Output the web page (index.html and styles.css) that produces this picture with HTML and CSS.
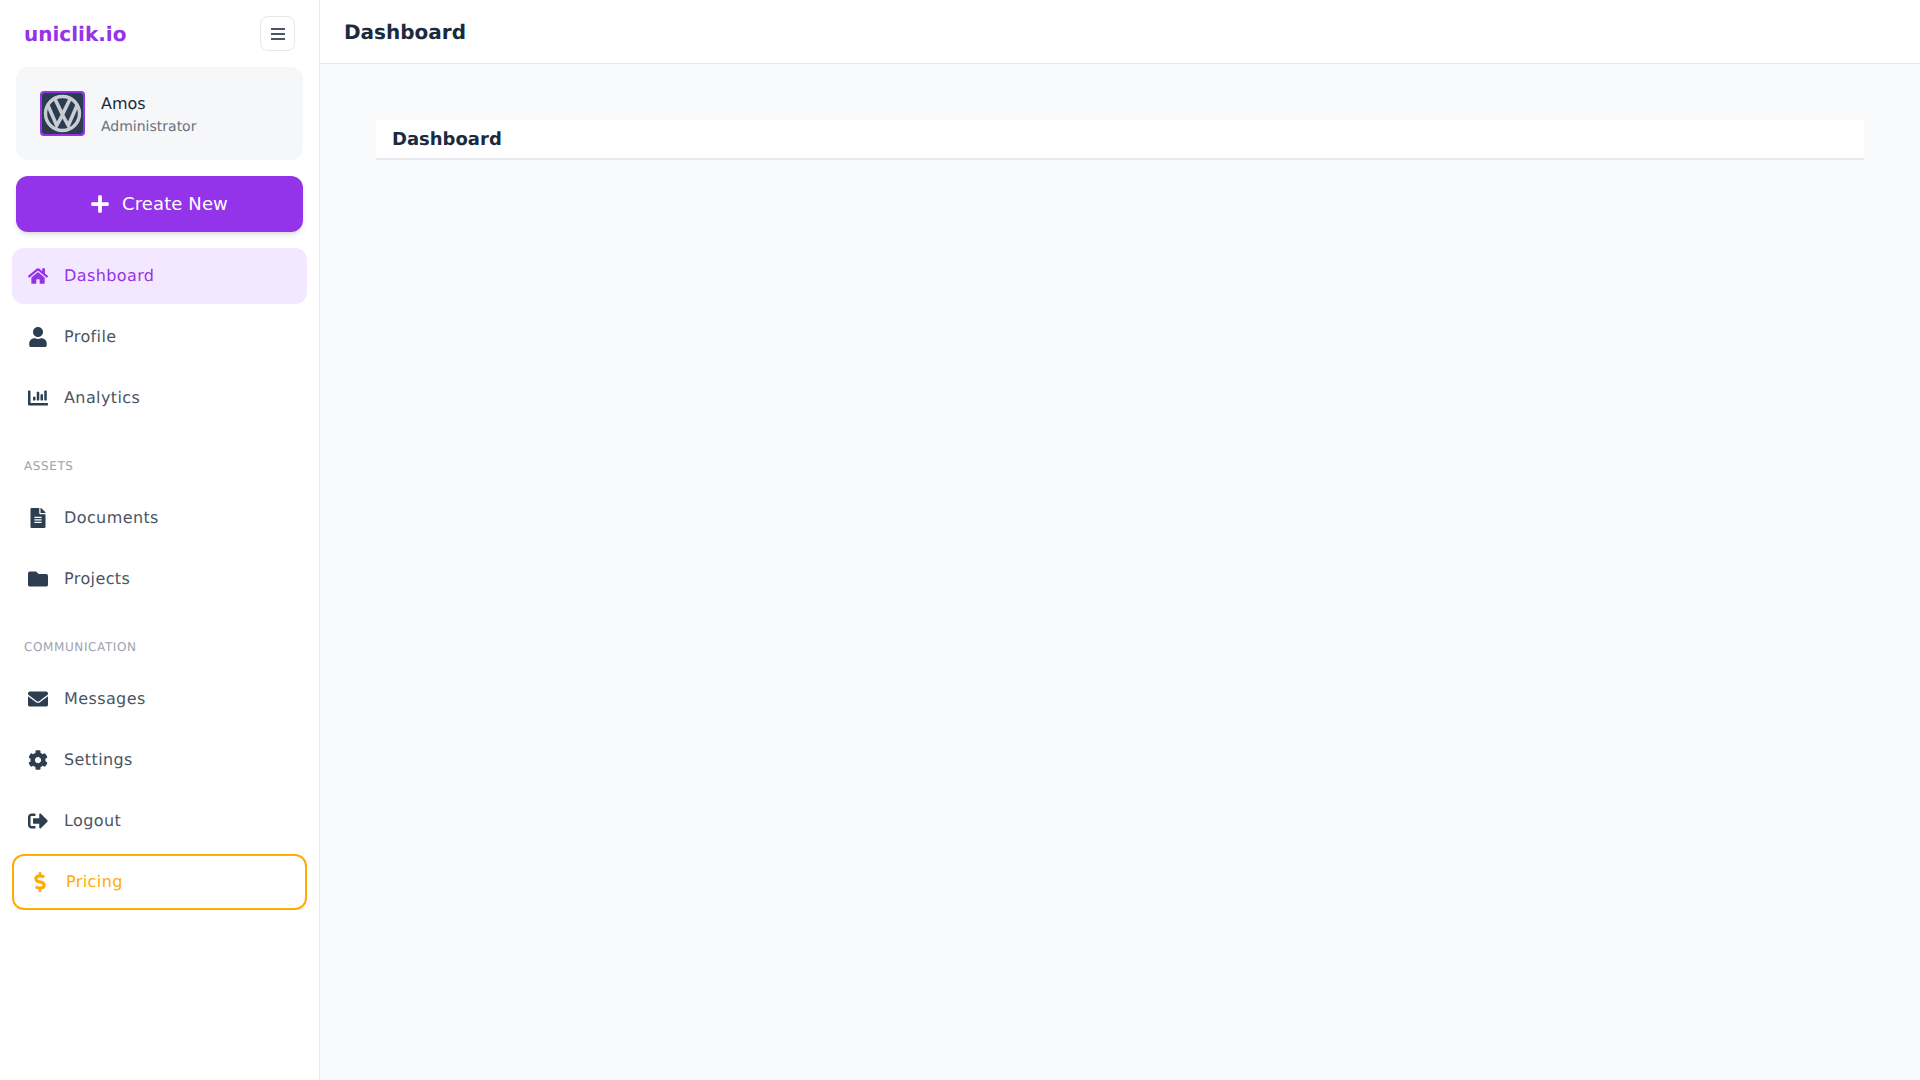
FILE: index.html
```html
<!DOCTYPE html>
<html lang="en">
<head>
<meta charset="utf-8">
<title>Dashboard</title>
<link rel="stylesheet" href="styles.css">
</head>
<body>
<div class="app">
  <aside class="sidebar">
    <div class="brand-row">
      <span class="brand">uniclik.io</span>
      <button class="menu-btn" aria-label="Menu">
        <svg class="menu-icon" viewBox="0 0 14 12"><path d="M0 0h14v2H0zM0 5h14v2H0zM0 10h14v2H0z"/></svg>
      </button>
    </div>
    <div class="user-card">
      <div class="avatar">
        <svg viewBox="0 0 41 41" class="avatar-logo">
          <rect width="41" height="41" fill="#2b3c50"/>
          <circle cx="20.5" cy="20.500" r="17" fill="none" stroke="#c9cdd1" stroke-width="3.400"/>
          <path d="M6 12.500l8.700 20 5.800-10.500 5.800 10.500 8.700-20M12.500 5l8 16.500 8-16.500" fill="none" stroke="#c9cdd1" stroke-width="3.600"/>
        </svg>
      </div>
      <div class="user-info">
        <div class="user-name">Amos</div>
        <div class="user-role">Administrator</div>
      </div>
    </div>
    <button class="create-btn">
      <svg class="plus-icon" viewBox="0 0 448 512"><path d="M416 208H272V64c0-17.670-14.330-32-32-32h-32c-17.670 0-32 14.330-32 32v144H32c-17.670 0-32 14.330-32 32v32c0 17.670 14.330 32 32 32h144v144c0 17.670 14.330 32 32 32h32c17.670 0 32-14.330 32-32V304h144c17.670 0 32-14.330 32-32v-32c0-17.670-14.330-32-32-32z"/></svg>
      <span>Create New</span>
    </button>
    <nav class="nav">
      <a class="nav-item active">
        <svg class="nav-icon" viewBox="0 0 576 512"><path d="M280.370 148.260L96 300.110V464a16 16 0 0 0 16 16l112.060-.29a16 16 0 0 0 15.920-16V368a16 16 0 0 1 16-16h64a16 16 0 0 1 16 16v95.640a16 16 0 0 0 16 16.050L464 480a16 16 0 0 0 16-16V300L295.670 148.260a12.190 12.190 0 0 0-15.300 0zM571.600 251.470L488 182.560V44.050a12 12 0 0 0-12-12h-56a12 12 0 0 0-12 12v72.610L318.470 43a48 48 0 0 0-61 0L4.340 251.470a12 12 0 0 0-1.600 16.900l25.500 31A12 12 0 0 0 45.150 301l235.220-193.740a12.190 12.190 0 0 1 15.300 0L530.900 301a12 12 0 0 0 16.900-1.600l25.500-31a12 12 0 0 0-1.700-16.930z"/></svg>
        <span>Dashboard</span>
      </a>
      <a class="nav-item">
        <svg class="nav-icon" viewBox="0 0 448 512"><path d="M224 256c70.700 0 128-57.300 128-128S294.700 0 224 0 96 57.300 96 128s57.300 128 128 128zm89.600 32h-16.700c-22.200 10.200-46.900 16-72.900 16s-50.600-5.800-72.900-16h-16.700C60.200 288 0 348.200 0 422.400V464c0 26.500 21.500 48 48 48h352c26.500 0 48-21.500 48-48v-41.600c0-74.200-60.200-134.400-134.400-134.400z"/></svg>
        <span>Profile</span>
      </a>
      <a class="nav-item">
        <svg class="nav-icon" viewBox="0 0 512 512"><path d="M332.800 320h38.400c6.400 0 12.800-6.400 12.800-12.800V172.800c0-6.400-6.400-12.800-12.800-12.800h-38.400c-6.400 0-12.800 6.400-12.800 12.800v134.400c0 6.400 6.400 12.800 12.800 12.800zm96 0h38.400c6.400 0 12.800-6.400 12.800-12.800V76.800c0-6.400-6.400-12.800-12.800-12.800h-38.400c-6.400 0-12.800 6.400-12.800 12.800v230.400c0 6.400 6.400 12.800 12.800 12.800zm-288 0h38.400c6.400 0 12.800-6.400 12.800-12.800v-70.400c0-6.400-6.400-12.800-12.800-12.800h-38.400c-6.400 0-12.800 6.400-12.800 12.800v70.400c0 6.400 6.400 12.800 12.800 12.800zm96 0h38.400c6.400 0 12.800-6.400 12.800-12.800V108.800c0-6.400-6.400-12.800-12.800-12.800h-38.400c-6.400 0-12.800 6.400-12.800 12.800v198.400c0 6.400 6.400 12.800 12.800 12.800zM496 384H64V80c0-8.840-7.160-16-16-16H16C7.160 64 0 71.160 0 80v336c0 17.670 14.330 32 32 32h464c8.840 0 16-7.160 16-16v-32c0-8.840-7.160-16-16-16z"/></svg>
        <span>Analytics</span>
      </a>
      <div class="nav-label">ASSETS</div>
      <a class="nav-item">
        <svg class="nav-icon" viewBox="0 0 384 512"><path d="M224 136V0H24C10.700 0 0 10.700 0 24v464c0 13.300 10.700 24 24 24h336c13.300 0 24-10.700 24-24V160H248c-13.200 0-24-10.800-24-24zm64 236c0 6.600-5.400 12-12 12H108c-6.600 0-12-5.400-12-12v-8c0-6.600 5.400-12 12-12h168c6.600 0 12 5.400 12 12v8zm0-64c0 6.600-5.400 12-12 12H108c-6.600 0-12-5.400-12-12v-8c0-6.600 5.400-12 12-12h168c6.600 0 12 5.400 12 12v8zm0-72v8c0 6.600-5.400 12-12 12H108c-6.600 0-12-5.400-12-12v-8c0-6.600 5.400-12 12-12h168c6.600 0 12 5.400 12 12zm96-114.100v6.100H256V0h6.100c6.400 0 12.500 2.500 17 7l97.900 98c4.500 4.500 7 10.600 7 16.900z"/></svg>
        <span>Documents</span>
      </a>
      <a class="nav-item">
        <svg class="nav-icon" viewBox="0 0 512 512"><path d="M464 128H272l-64-64H48C21.490 64 0 85.490 0 112v288c0 26.510 21.490 48 48 48h416c26.510 0 48-21.490 48-48V176c0-26.510-21.490-48-48-48z"/></svg>
        <span>Projects</span>
      </a>
      <div class="nav-label">COMMUNICATION</div>
      <a class="nav-item">
        <svg class="nav-icon" viewBox="0 0 512 512"><path d="M502.300 190.800c3.900-3.100 9.700-.2 9.700 4.700V400c0 26.500-21.500 48-48 48H48c-26.500 0-48-21.500-48-48V195.600c0-5 5.700-7.800 9.700-4.700 22.400 17.400 52.100 39.500 154.100 113.600 21.100 15.400 56.700 47.800 92.200 47.600 35.700.3 72-32.800 92.300-47.600 102-74.100 131.600-96.300 154-113.700zM256 320c23.200.4 56.600-29.200 73.400-41.400 132.700-96.300 142.800-104.700 173.400-128.700 5.800-4.500 9.200-11.500 9.200-18.900v-19c0-26.500-21.500-48-48-48H48C21.500 64 0 85.500 0 112v19c0 7.400 3.400 14.300 9.200 18.900 30.600 23.900 40.700 32.400 173.400 128.700 16.800 12.200 50.200 41.800 73.400 41.400z"/></svg>
        <span>Messages</span>
      </a>
      <a class="nav-item">
        <svg class="nav-icon" viewBox="0 0 512 512"><path d="M487.400 315.700l-42.600-24.600c4.300-23.200 4.300-47 0-70.200l42.600-24.600c4.900-2.800 7.100-8.600 5.500-14-11.100-35.600-30-67.800-54.700-94.600-3.800-4.100-10-5.100-14.800-2.300L380.800 110c-17.900-15.400-38.500-27.300-60.800-35.100V25.800c0-5.600-3.900-10.500-9.400-11.700-36.700-8.200-74.300-7.800-109.200 0-5.500 1.200-9.400 6.100-9.400 11.700V75c-22.200 7.900-42.800 19.800-60.800 35.100L88.700 85.500c-4.900-2.800-11-1.900-14.800 2.300-24.700 26.700-43.600 58.900-54.700 94.600-1.700 5.400.6 11.200 5.500 14L67.300 221c-4.300 23.200-4.300 47 0 70.200l-42.600 24.600c-4.900 2.800-7.100 8.600-5.500 14 11.100 35.600 30 67.800 54.700 94.600 3.800 4.100 10 5.100 14.800 2.300l42.600-24.600c17.900 15.400 38.500 27.300 60.800 35.100v49.200c0 5.600 3.900 10.500 9.400 11.700 36.700 8.200 74.300 7.800 109.200 0 5.500-1.200 9.400-6.100 9.400-11.700v-49.200c22.200-7.900 42.800-19.800 60.800-35.100l42.600 24.600c4.900 2.800 11 1.900 14.800-2.300 24.700-26.700 43.600-58.900 54.700-94.600 1.500-5.500-.7-11.300-5.600-14.100zM256 336c-44.100 0-80-35.900-80-80s35.900-80 80-80 80 35.900 80 80-35.900 80-80 80z"/></svg>
        <span>Settings</span>
      </a>
      <a class="nav-item">
        <svg class="nav-icon" viewBox="0 0 512 512"><path d="M497 273L329 441c-15 15-41 4.500-41-17v-96H152c-13.300 0-24-10.700-24-24v-96c0-13.300 10.700-24 24-24h136V88c0-21.400 25.900-32 41-17l168 168c9.300 9.400 9.300 24.600 0 34zM192 436v-40c0-6.600-5.400-12-12-12H96c-17.700 0-32-14.300-32-32V160c0-17.700 14.300-32 32-32h84c6.600 0 12-5.400 12-12V76c0-6.600-5.400-12-12-12H96c-53 0-96 43-96 96v192c0 53 43 96 96 96h84c6.600 0 12-5.400 12-12z"/></svg>
        <span>Logout</span>
      </a>
      <a class="nav-item pricing">
        <svg class="nav-icon dollar" viewBox="0 0 288 512"><path d="M209.200 233.400l-108-31.600C88.700 198.200 80 186.500 80 173.500c0-16.300 13.200-29.500 29.500-29.500h66.300c12.200 0 24.200 3.700 34.200 10.500 6.100 4.100 14.300 3.100 19.500-2l34.800-34c7.100-6.900 6.100-18.400-1.800-24.500C238 74.800 207.400 64.100 176 64V16c0-8.800-7.200-16-16-16h-32c-8.800 0-16 7.200-16 16v48h-2.500C45.800 64-5.400 118.700.5 183.600c4.200 46.100 39.400 83.600 83.800 96.600l102.500 30c12.500 3.700 21.200 15.300 21.200 28.300 0 16.300-13.200 29.500-29.500 29.500h-66.300C100 368 88 364.300 78 357.500c-6.100-4.100-14.300-3.100-19.500 2l-34.800 34c-7.100 6.900-6.100 18.400 1.800 24.500 24.500 19.200 55.100 29.900 86.500 30v48c0 8.800 7.200 16 16 16h32c8.800 0 16-7.200 16-16v-48.200c46.600-.9 90.300-28.600 105.700-72.700 21.500-61.600-14.600-124.800-72.500-141.700z"/></svg>
        <span>Pricing</span>
      </a>
    </nav>
  </aside>
  <div class="main">
    <header class="topbar"><h1 class="topbar-title">Dashboard</h1></header>
    <main class="content">
      <div class="page-head"><h2 class="page-title">Dashboard</h2></div>
    </main>
  </div>
</div>
</body>
</html>
```
FILE: styles.css
```css
* { box-sizing: border-box; }
html, body { margin: 0; height: 100%; }
body {
  font-family: "DejaVu Sans", sans-serif;
  background: #f9fafb;
  color: #1f2937;
  text-rendering: geometricPrecision;
}
.app { display: flex; height: 1080px; overflow: hidden; }

.sidebar {
  width: 320px;
  flex: none;
  background: #fff;
  border-right: 1px solid #e5e7eb;
  display: flex;
  flex-direction: column;
}
.brand-row {
  display: flex;
  align-items: center;
  justify-content: space-between;
  height: 67px;
  padding: 0 24px;
}
.brand { font-size: 20px; line-height: 28px; font-weight: 700; color: #9333ea; }
.menu-btn {
  width: 35px;
  height: 35px;
  padding: 0;
  background: #fff;
  border: 1px solid #e5e7eb;
  border-radius: 8px;
  display: flex;
  align-items: center;
  justify-content: center;
}
.menu-icon { width: 14px; height: 12px; fill: #4b5563; }

.user-card {
  margin: 0 16px;
  height: 93px;
  padding: 0 24px;
  background: #f6f7f9;
  border-radius: 12px;
  display: flex;
  align-items: center;
  gap: 16px;
}
.avatar {
  width: 45px;
  height: 45px;
  flex: none;
  border: 2px solid #9333ea;
  border-radius: 4px;
  overflow: hidden;
}
.avatar-logo { display: block; width: 41px; height: 41px; }
.user-info { padding-top: 1px; }
.user-name { margin-bottom: 1px; font-size: 16px; line-height: 24px; color: #1a2b3f; }
.user-role { font-size: 14px; line-height: 20px; color: #6b7280; }

.create-btn {
  margin: 16px 16px 0;
  height: 56px;
  border: 0;
  border-radius: 12px;
  background: #9333ea;
  color: #fff;
  font: inherit;
  font-size: 18px;
  line-height: 28px;
  letter-spacing: .1px;
  display: flex;
  align-items: center;
  justify-content: center;
  gap: 13px;
  box-shadow: 0 4px 6px -1px rgba(0,0,0,.1), 0 2px 4px -2px rgba(0,0,0,.1);
}
.plus-icon { width: 18px; height: 20px; fill: #fff; }

.nav { margin: 16px 12px 0; display: flex; flex-direction: column; gap: 5px; }
.nav-item {
  height: 56px;
  padding: 0 16px;
  border-radius: 12px;
  display: flex;
  align-items: center;
  gap: 16px;
  font-size: 16px;
  line-height: 24px;
  letter-spacing: .4px;
  color: #4b5563;
}
.nav-icon { width: 20px; height: 20px; flex: none; fill: #2c3e50; }
.nav-item.active { background: #f3e8ff; color: #9333ea; }
.nav-item.active .nav-icon { fill: #9333ea; }
.nav-item.pricing { border: 2px solid #ffab00; color: #ffab00; }
.nav-item.pricing .nav-icon { fill: #ffab00; }
.nav-label {
  margin: 27px 12px 11px;
  font-size: 12px;
  line-height: 16px;
  letter-spacing: .6px;
  color: #9ca3af;
}

.main { flex: 1; min-width: 0; display: flex; flex-direction: column; }
.topbar {
  height: 64px;
  padding: 0 24px;
  background: #fff;
  border-bottom: 1px solid #e5e7eb;
  display: flex;
  align-items: center;
}
.topbar-title { margin: 0; font-size: 20px; line-height: 28px; font-weight: 700; color: #1a2b3f; }
.content { flex: 1; padding: 56px; }
.page-head {
  height: 40px;
  padding: 1px 16px 0;
  background: #fff;
  border-bottom: 2px solid #e9ebee;
  display: flex;
  align-items: center;
}
.page-title { margin: 0; font-size: 18px; line-height: 28px; font-weight: 700; color: #1a2b3f; }
```
